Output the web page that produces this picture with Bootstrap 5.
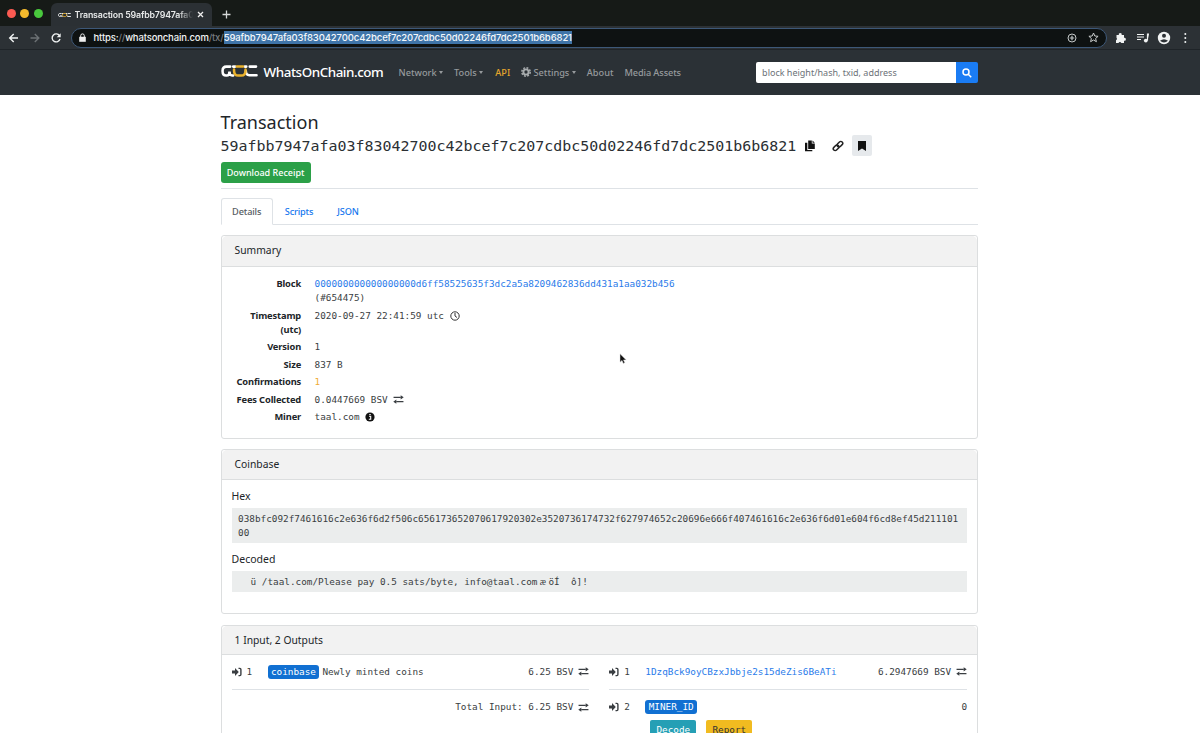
<!DOCTYPE html>
<html lang="en">
<head>
<meta charset="utf-8">
<meta name="viewport" content="width=device-width, initial-scale=1">
<title>Transaction - WhatsOnChain.com</title>
<link href="https://cdn.jsdelivr.net/npm/bootstrap@5.3.0/dist/css/bootstrap.min.css" rel="stylesheet">
<style>
body{font:10px/14px "Noto Sans","Open Sans",sans-serif;color:#212529;height:733px;overflow:hidden;background:#fff}
svg{display:block;flex:none}
a{text-decoration:none;color:#2a7bea}
.mono{font-family:"DejaVu Sans Mono","Liberation Mono",monospace;font-size:9.357px;color:#3a3e42}
.tabstrip{height:26px;background:#161a17;padding-left:7px}
.light{width:9px;height:9px;border-radius:50%;margin-right:4.3px}
.browsertab{width:161px;height:23px;margin:3px 0 0 8px;background:#2b3034;border-radius:6px 6px 0 0;font:600 8.8px Inter,sans-serif;letter-spacing:-.16px;color:#e6e8e8;padding:0 7px}
.tabtitle{width:118px;overflow:hidden;white-space:nowrap;margin-left:4px;-webkit-mask-image:linear-gradient(90deg,#000 88%,transparent)}
.toolbar{height:24px;background:#2c3135;border-bottom:1px solid #1f2428}
.urlbar{width:1036px;height:20px;border:1.5px solid #3d5878;border-radius:10px;background:#0e1212;padding:0 7px;font:500 9.5px Inter,sans-serif;letter-spacing:-.15px;color:#f0f2f2}
.urlbar .dim{color:#777c80}
.picked{background:#3f74a8;color:#f4f8fb;line-height:13px;letter-spacing:-.11px}
.site{height:45px;background:#2b3136;padding:0}
.wrap{width:757.500px;margin-left:220.600px}
.brandname{font-size:13.4px;font-weight:500;letter-spacing:-.45px;color:#fff;margin-left:6px;width:119px;white-space:nowrap}
.menu span{color:#969a9d;font-size:9.2px;font-weight:500;white-space:nowrap}
.menu .dropdown-toggle::after{border-width:3px 2.5px 0;margin-left:2.5px;vertical-align:2px}
.search{width:222px;height:21px}
.searchfield{width:200px;background:#fff;border-radius:2px 0 0 2px;color:#6c7278;font-size:9px;line-height:21px;padding-left:6px}
.searchbtn{width:22px;background:#1a7cf4;border-radius:0 2px 2px 0}
h1{font-size:18px;line-height:22px;margin:0;font-weight:400}
.hash{font-size:14.95px;color:#2b2f33;line-height:20px;margin-top:1px}
.markbtn{width:20px;height:21px;background:#e6e9ec;border-radius:2px}
.receipt{width:90px;height:21px;padding:0;background:#2ba048;color:#fff;font-size:9px;border:0;border-radius:3px;font-weight:500}
.nav-tabs{height:27px;border-color:#dee2e6}
.nav-tabs .nav-link{height:27px;padding:6px 11px;line-height:14px;font-size:9.2px;letter-spacing:-.15px;color:#1677ee;font-weight:500;border-radius:3px 3px 0 0}
.nav-tabs .nav-link.active{color:#565c62}
.nav-tabs .nav-item:first-child .nav-link{padding:6px 10.500px}
.card{border:1px solid #dcdedf;border-radius:3px;--bs-card-color:#212529}
.card-header{padding:0 13px;height:30px;line-height:29px;background:#f2f2f2;font-size:10.300px;border-color:#dcdedf}
.facts{display:grid;grid-template-columns:70px 1fr;column-gap:13.5px;row-gap:3.5px;padding:10px 10px 0 9.500px;height:171px;align-content:start}
.facts dt{text-align:right;font-size:9.3px;font-weight:700;letter-spacing:-.13px;margin:0;white-space:nowrap}
.facts dd{margin:0}
.inl{display:inline-block;vertical-align:-2px;margin-left:2px}
.codebox{background:#ebeded;margin:0;padding:3.5px 6.5px;line-height:14px;overflow:hidden}
.sub{font-size:10.5px;line-height:14px}
.tagblue{background:#1170d2;color:#fff;border-radius:3px;height:14px;line-height:13px;padding:0 3.4px;display:inline-block}
.iorow{height:35px;padding-bottom:1px}
.act{width:46px;height:20px;line-height:19px;text-align:center;border-radius:2px}
.pointer{position:absolute;left:619px;top:353px}
</style>
</head>
<body class="position-relative">
<svg width="0" height="0" class="position-absolute">
<defs>
<symbol id="swap" viewBox="0 0 12 10"><path d="M.5 2.600h8M11.500 7.400h-8" stroke="currentColor" stroke-width="1.400"/><path d="M8.400.2 11.800 2.600 8.400 5zM3.600 5 .2 7.400l3.400 2.400z" fill="currentColor"/></symbol>
<symbol id="enter" viewBox="0 0 10 10"><path d="M0 3.500h3V1L6.800 5 3 9V6.500H0z" fill="currentColor"/><path d="M6.500 1.400h1.400q1 0 1 1v5.200q0 1-1 1H6.500" fill="none" stroke="currentColor" stroke-width="1.400"/></symbol>
<symbol id="chain" viewBox="0 0 38 14"><g fill="none" stroke-width="2.600" stroke-linecap="round"><path d="M9.500 2.500H5.600C2.900 2.500 1.600 4 1.600 6.900s1.200 4.700 3.600 4.700h.7c1.900 0 2.800-1.200 2.800-4.100 0 2.900 1 4.100 2.800 4.100h1" stroke="#fff"/><path d="M12.500 2.500h2M24.500 2.500h1.500M29.500 2.500h6.500M36.500 11.300h-7.300c-2.400 0-3.700-1.600-3.700-4.300" stroke="#fff"/><path d="M13.400 5.500v1.200c0 3.200 1.700 5 4.400 5h3c2.700 0 4.400-1.800 4.400-5V5.500M16.200 2.400h6.400" stroke="#eab22d"/></g></symbol>
</defs>
</svg>

<div class="tabstrip d-flex align-items-center">
  <i class="light" style="background:#fb5b52"></i><i class="light" style="background:#f5bb2d"></i><i class="light m-0" style="background:#49c93d"></i>
  <div class="browsertab d-flex align-items-center">
    <svg width="13" height="6" viewBox="0 0 38 14"><use href="#chain" width="38" height="14"/></svg>
    <span class="tabtitle">Transaction 59afbb7947afa03</span>
    <svg width="7" height="7" viewBox="0 0 7 7" class="ms-1"><path d="m1 1 5 5M6 1 1 6" stroke="#eee" stroke-width="1.300"/></svg>
  </div>
  <svg width="9" height="9" viewBox="0 0 9 9" style="margin:3px 0 0 10px"><path d="M4.500.5v8M.5 4.500h8" stroke="#d5d8d8" stroke-width="1.300"/></svg>
</div>
<div class="toolbar d-flex align-items-center">
  <svg width="64" height="20" viewBox="0 0 64 20" fill="none" stroke-width="1.400"><path d="M18 10H10M13.700 6 9.700 10l4 4" stroke="#f1f3f3"/><path d="M30.500 10h8M34.800 6l4 4-4 4" stroke="#6c7174"/><path d="M59.500 7.700A4 4 0 1 0 60 11" stroke="#f1f3f3"/><path d="M60.700 5.300v4h-4z" fill="#f1f3f3"/></svg>
  <div class="urlbar d-flex align-items-center" style="margin-left:7px">
    <svg width="7" height="10" viewBox="0 0 7 10"><path d="M.2 3.800h6.600v5H.2z" fill="#eee"/><path d="M1.700 4V2.700a1.800 1.800 0 0 1 3.600 0V4" fill="none" stroke="#eee"/></svg>
    <span style="margin-left:7.500px">https:<span class="dim">//</span>whatsonchain.com<span class="dim">/tx/</span></span><span class="picked">59afbb7947afa03f83042700c42bcef7c207cdbc50d02246fd7dc2501b6b6821</span>
    <svg class="ms-auto" width="10" height="10" viewBox="0 0 10 10" fill="none" stroke="#c4c8c8"><circle cx="5" cy="5" r="4"/><path d="M2.800 5h4.400M5 2.800v4.400" stroke-width="1.200"/></svg>
    <svg style="margin-left:11px" width="11" height="11" viewBox="0 0 11 11"><path d="m5.500 1 1.300 3 3.300.3-2.500 2.200.8 3.200-2.900-1.700-2.900 1.700.8-3.200L.9 4.300 4.200 4z" fill="none" stroke="#c9cccc"/></svg>
  </div>
  <svg width="90" height="20" viewBox="0 0 90 20" fill="#f1f3f3"><path d="M9.500 7h2.300a1.500 1.500 0 1 1 2.900 0H17v2.800a1.500 1.500 0 1 1 0 2.900V15h-2.700a1.500 1.500 0 0 0-2.800 0H9v-2.800a1.500 1.500 0 0 0 .5-2.500z"/><path d="M30 6.500h7M30 9h7M30 11.500h4M40.500 12.500V6.200H42" stroke="#f1f3f3" stroke-width="1.200"/><circle cx="38.800" cy="12.600" r="1.900"/><circle cx="57" cy="10" r="6.200"/><circle cx="57" cy="7.700" r="2" fill="#2c3135"/><path d="M53 12.800q4-3.300 8 0-4 3.400-8 0" fill="#2c3135"/><circle cx="78.300" cy="6" r="1"/><circle cx="78.300" cy="10" r="1"/><circle cx="78.300" cy="14" r="1"/></svg>
</div>

<nav class="navbar site"><div class="wrap d-flex align-items-center">
  <svg width="37" height="14" style="margin-top:-3px"><use href="#chain"/></svg>
  <span class="brandname" style="margin-top:-1px">WhatsOnChain.com</span>
  <div class="menu d-flex align-items-center" style="margin-left:16px;gap:11px">
    <span class="dropdown-toggle">Network</span><span class="dropdown-toggle">Tools</span><span style="color:#e5a52c;margin-left:1px">API</span>
    <span class="dropdown-toggle"><svg class="d-inline-block" style="vertical-align:-1px" width="10" height="10" viewBox="0 0 10 10"><circle cx="5" cy="5" r="2.600" fill="none" stroke="#a9adaf" stroke-width="1.900"/><circle cx="5" cy="5" r="4.200" fill="none" stroke="#a9adaf" stroke-width="1.500" stroke-dasharray="1.900 1.400"/></svg> Settings</span>
    <span>About</span><span style="letter-spacing:-.1px">Media Assets</span>
  </div>
  <div class="search d-flex ms-auto"><div class="searchfield">block height/hash, txid, address</div>
    <div class="searchbtn d-flex align-items-center justify-content-center"><svg width="10" height="10" viewBox="0 0 10 10" fill="none" stroke="#fff" stroke-width="1.500"><circle cx="4" cy="4" r="3"/><path d="m6.200 6.200 3 3"/></svg></div></div>
</div></nav>

<main class="wrap">
  <h1 style="padding-top:16px">Transaction</h1>
  <div class="d-flex align-items-center" style="height:25px">
    <span class="mono hash">59afbb7947afa03f83042700c42bcef7c207cdbc50d02246fd7dc2501b6b6821</span>
    <svg style="margin-left:9px" width="10" height="12" viewBox="0 0 10 12" fill="#111"><path d="M3.200.5h3.600v3h3V9H3.200zM7.500.5 9.800 2.800H7.500zM0 2.800h2.300v7.100h5v1.400H0z"/></svg>
    <svg style="margin-left:17px" width="12" height="12" viewBox="0 0 12 12" fill="none" stroke="#222" stroke-width="1.500"><rect x="-3.200" y="-1.900" width="6.400" height="3.800" rx="1.900" transform="translate(7.900 4.200) rotate(-45)"/><rect x="-3.200" y="-1.900" width="6.400" height="3.800" rx="1.900" transform="translate(4.100 7.800) rotate(-45)"/></svg>
    <div class="markbtn d-flex align-items-center justify-content-center" style="margin-left:8px"><svg width="8" height="10" viewBox="0 0 8 10"><path d="M0 0h8v10L4 7.500 0 10z" fill="#111"/></svg></div>
  </div>
  <button class="btn receipt d-block" style="margin-top:4px">Download Receipt</button>
  <div class="border-top" style="margin:5px 0 9px"></div>
  <ul class="nav nav-tabs"><li class="nav-item"><a class="nav-link active" href="#">Details</a></li><li class="nav-item"><a class="nav-link" href="#">Scripts</a></li><li class="nav-item"><a class="nav-link" href="#">JSON</a></li></ul>

  <section class="card" style="margin-top:10px"><div class="card-header" style="height:31px">Summary</div>
    <dl class="facts mb-0">
      <dt>Block</dt><dd class="mono"><a href="#">000000000000000000d6ff58525635f3dc2a5a8209462836dd431a1aa032b456</a><br>(#654475)</dd>
      <dt>Timestamp<br>(utc)</dt><dd class="mono">2020-09-27 22:41:59 utc<svg class="inl" style="margin-left:6px" width="10" height="10" viewBox="0 0 10 10" fill="none" stroke="#333"><circle cx="5" cy="5" r="4.200"/><path d="M5 2v3l2 1.500"/></svg></dd>
      <dt>Version</dt><dd class="mono">1</dd>
      <dt>Size</dt><dd class="mono">837 B</dd>
      <dt>Confirmations</dt><dd class="mono" style="color:#f0ab35">1</dd>
      <dt>Fees Collected</dt><dd class="mono">0.0447669 BSV<svg class="inl" style="margin-left:5px;vertical-align:-1px" width="11" height="9"><use href="#swap"/></svg></dd>
      <dt>Miner</dt><dd class="mono">taal.com<svg class="inl" style="margin-left:5px" width="10" height="10" viewBox="0 0 10 10"><circle cx="5" cy="5" r="4.600" fill="#111"/><path d="M4 4.300h1.700v3M3.800 7.300h2.500M4.300 2.500h1.400" stroke="#fff" stroke-width="1.100" fill="none"/></svg></dd>
    </dl>
  </section>

  <section class="card" style="margin-top:10px;height:165px"><div class="card-header" style="height:30px">Coinbase</div>
    <div style="padding:9px 10px">
      <div class="sub">Hex</div>
      <div class="codebox mono text-break" style="margin-top:5px">038bfc092f7461616c2e636f6d2f506c656173652070617920302e3520736174732f627974652c20696e666f407461616c2e636f6d01e604f6cd8ef45d211101<br>00</div>
      <div class="sub" style="margin-top:9px">Decoded</div>
      <div class="codebox mono" style="margin-top:5px;padding-left:19px;white-space:pre">ü /taal.com/Please pay 0.5 sats/byte, info@taal.com<span style="font-family:'Liberation Serif',serif"> æ </span>öÍ  ô]!</div>
    </div>
  </section>

  <section class="card" style="margin-top:11px;height:150px"><div class="card-header" style="height:29px">1 Input, 2 Outputs</div>
    <div class="d-flex" style="padding:0 10px;gap:20px">
      <div style="width:358px">
        <div class="iorow border-bottom d-flex align-items-center mono"><svg width="10" height="10"><use href="#enter"/></svg><span style="margin-left:5px;width:21px">1</span><span class="tagblue">coinbase</span><span style="margin-left:3px">Newly minted coins</span><span class="ms-auto">6.25 BSV</span><svg width="11" height="9" style="margin-left:5px"><use href="#swap"/></svg></div>
        <div class="iorow d-flex align-items-center mono"><span class="ms-auto">Total Input: 6.25 BSV</span><svg width="11" height="9" style="margin-left:5px"><use href="#swap"/></svg></div>
      </div>
      <div style="width:358px">
        <div class="iorow border-bottom d-flex align-items-center mono"><svg width="10" height="10"><use href="#enter"/></svg><span style="margin-left:5px;width:21px">1</span><a href="#">1DzqBck9oyCBzxJbbje2s15deZis6BeATi</a><span class="ms-auto">6.2947669 BSV</span><svg width="11" height="9" style="margin-left:5px"><use href="#swap"/></svg></div>
        <div class="iorow d-flex align-items-center mono"><svg width="10" height="10"><use href="#enter"/></svg><span style="margin-left:5px;width:21px">2</span><span class="tagblue">MINER_ID</span><span class="ms-auto">0</span></div>
        <div class="d-flex mono" style="padding-left:41px;gap:10px;margin-top:-5px"><span class="act" style="background:#259fb5;color:#fff">Decode</span><span class="act" style="background:#f1bb20;color:#333">Report</span></div>
      </div>
    </div>
  </section>
</main>
<svg class="pointer" width="8" height="12" viewBox="0 0 8 12"><path d="M1 .8v8.400l2-1.800 1.300 3 1.500-.7-1.300-2.800h2.700z" fill="#111" stroke="#ddd" stroke-width=".5"/></svg>
</body>
</html>
